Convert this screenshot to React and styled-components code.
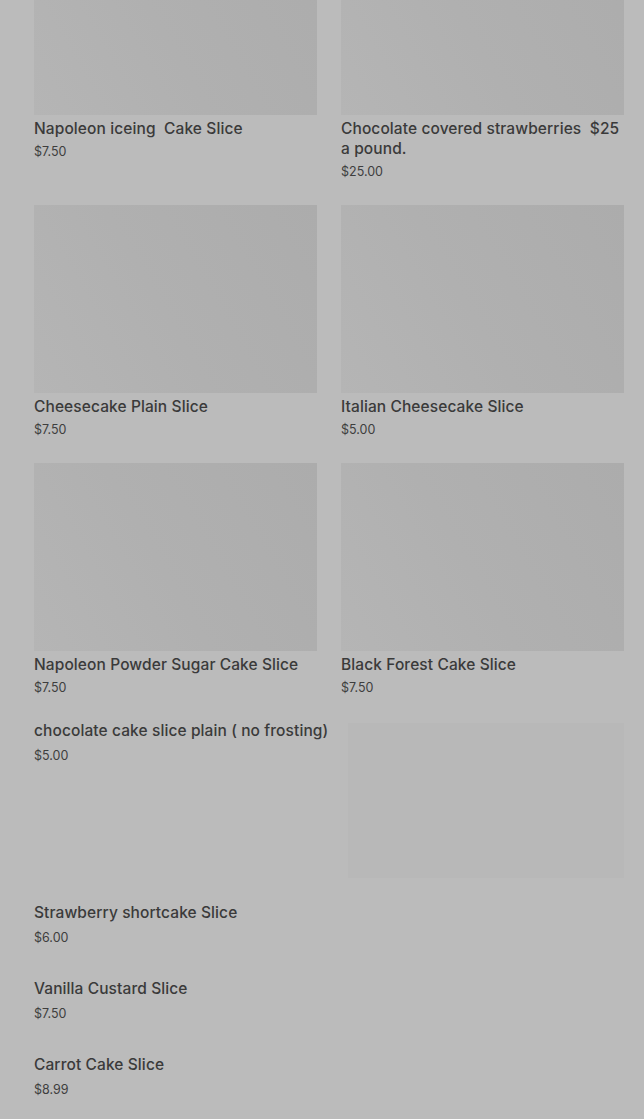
import React from "react";
import styled, { createGlobalStyle } from "styled-components";

const Global = createGlobalStyle`
  html, body { margin: 0; padding: 0; background: #bbbbbb; }
  body { font-family: Inter, "Noto Sans", sans-serif; color: #3b3b3b; overflow: hidden; }
`;

const Page = styled.main`
  padding: 0 20px 0 34px;
  margin-top: -73px;
`;

const Grid = styled.div`
  display: grid;
  grid-template-columns: 1fr 1fr;
  column-gap: 24px;
  row-gap: 24px;
`;

const Card = styled.div`
  display: flex;
  flex-direction: column;
`;

const Thumb = styled.div`
  height: 188px;
  background: linear-gradient(60deg, #b5b5b5 0%, #b0b0b0 45%, #acacac 100%);
`;

const Title = styled.div`
  font-size: 15.5px;
  font-weight: 500;
  line-height: 20px;
  color: #3a3a3a;
  margin-top: ${(p) => p.$mt ?? 4}px;
  letter-spacing: 0.1px;
  white-space: pre-wrap;
`;

const Price = styled.div`
  font-size: 12.5px;
  line-height: 18px;
  margin-top: ${(p) => p.$mt ?? 4}px;
  color: #3e3e3e;
`;

const Feature = styled.div`
  display: flex;
  align-items: flex-start;
  margin-top: 24px;
`;

const FeatureText = styled.div`
  display: flex;
  flex-direction: column;
  width: 314px;
  flex-shrink: 0;
`;

const FeatureThumb = styled.div`
  flex: 1;
  height: 155px;
  margin-top: 2px;
  background: #b8b8b8;
`;

const List = styled.div`
  display: flex;
  flex-direction: column;
  gap: 32px;
  margin-top: 25px;
`;

const gridItems = [
  { name: "Napoleon iceing  Cake Slice", price: "$7.50" },
  { name: "Chocolate covered strawberries  $25 a pound.", price: "$25.00" },
  { name: "Cheesecake Plain Slice", price: "$7.50" },
  { name: "Italian Cheesecake Slice", price: "$5.00" },
  { name: "Napoleon Powder Sugar Cake Slice", price: "$7.50" },
  { name: "Black Forest Cake Slice", price: "$7.50" },
];

const listItems = [
  { name: "Strawberry shortcake Slice", price: "$6.00" },
  { name: "Vanilla Custard Slice", price: "$7.50" },
  { name: "Carrot Cake Slice", price: "$8.99" },
];

export default function App() {
  return (
    <>
      <Global />
      <Page>
        <Grid>
          {gridItems.map((it) => (
            <Card key={it.name}>
              <Thumb />
              <Title>{it.name}</Title>
              <Price>{it.price}</Price>
            </Card>
          ))}
        </Grid>
        <Feature>
          <FeatureText>
            <Title $mt={0}>chocolate cake slice plain ( no frosting)</Title>
            <Price $mt={6}>$5.00</Price>
          </FeatureText>
          <FeatureThumb />
        </Feature>
        <List>
          {listItems.map((it) => (
            <Card key={it.name}>
              <Title $mt={0}>{it.name}</Title>
              <Price $mt={6}>{it.price}</Price>
            </Card>
          ))}
        </List>
      </Page>
    </>
  );
}
